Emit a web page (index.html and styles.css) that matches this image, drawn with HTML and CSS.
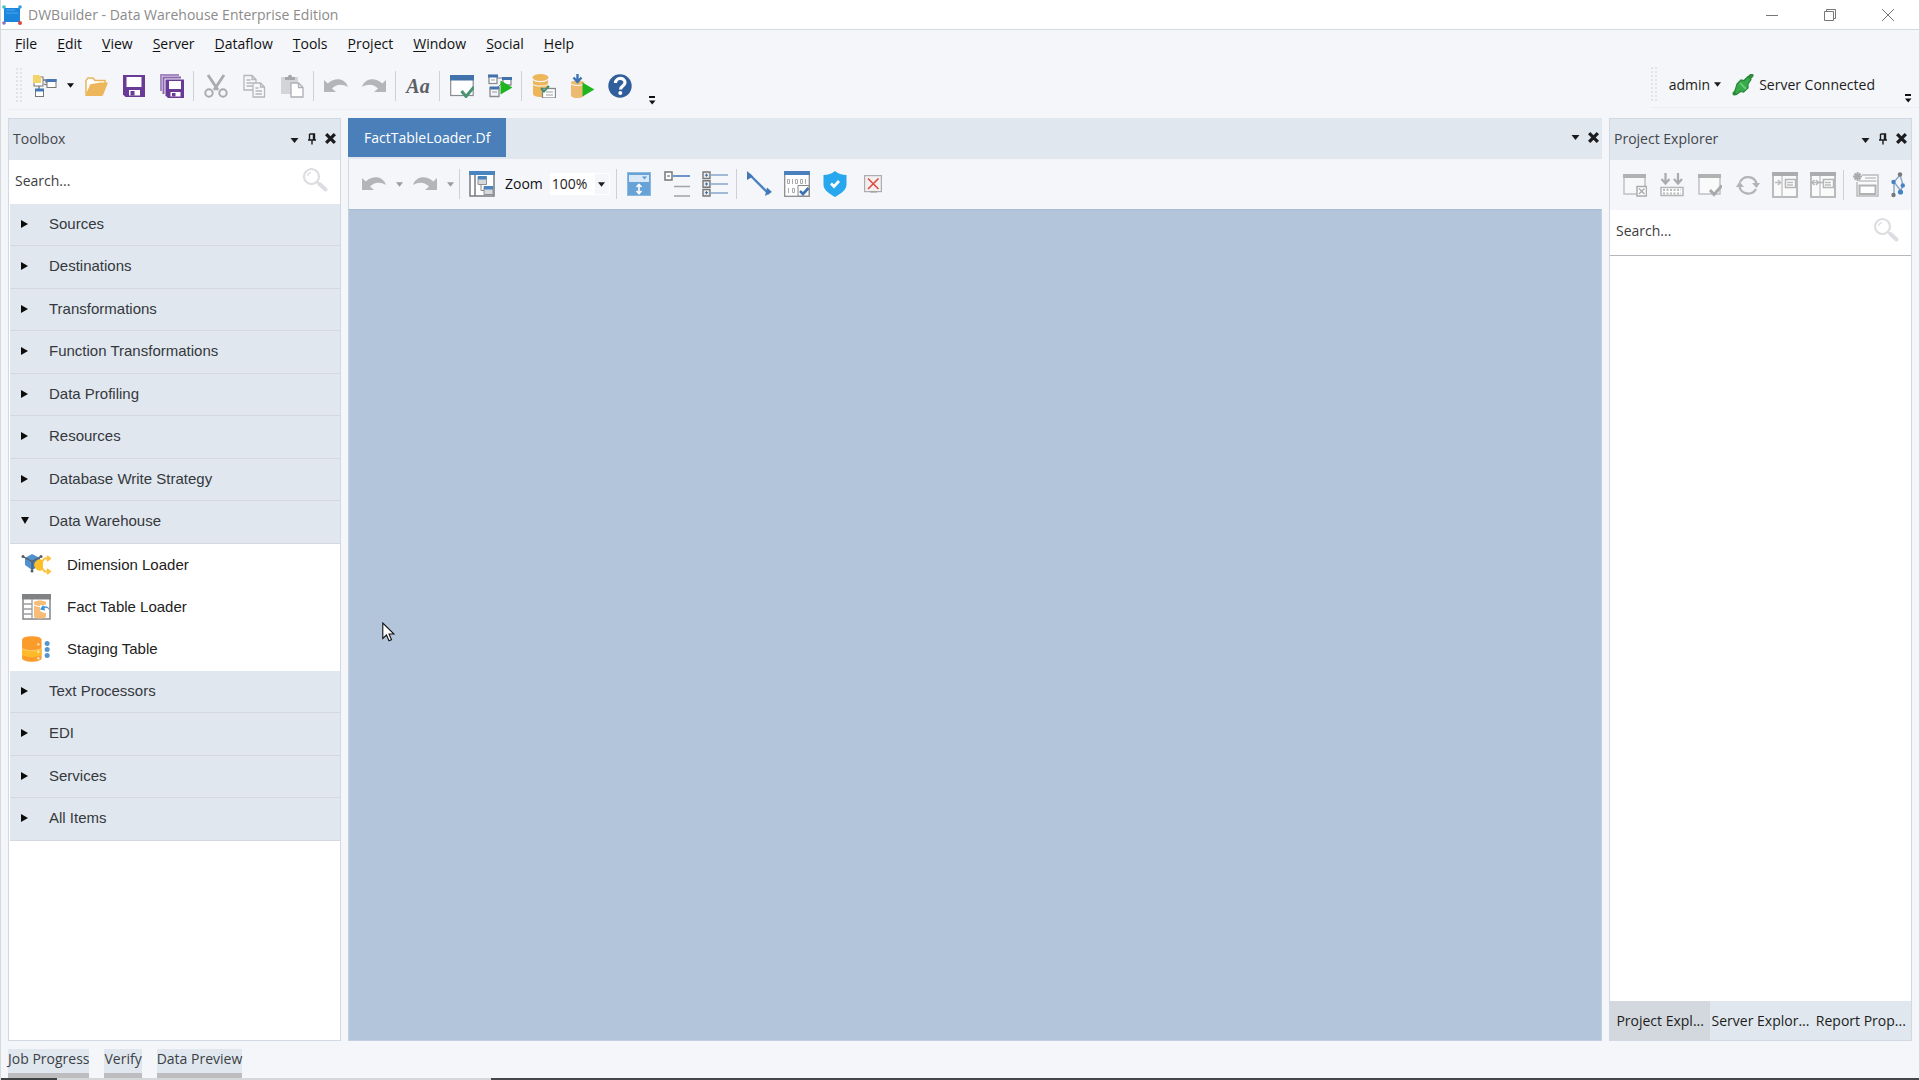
FILE: index.html
```html
<!DOCTYPE html>
<html lang="en">
<head>
<meta charset="utf-8">
<meta name="viewport" content="width=device-width, initial-scale=1">
<title>DWBuilder - Data Warehouse Enterprise Edition</title>
<link rel="stylesheet" href="styles.css">
</head>
<body>
<svg class="sprite" aria-hidden="true">
  <symbol id="i-caret" viewBox="0 0 8 5"><path d="M0 0h8L4 5z" fill="currentColor"/></symbol>
  <symbol id="i-pin" viewBox="0 0 10 12"><path d="M2.500 1h5v6M2.500 1v6M6.500 1v6M1 7h8M5 7v4.500" fill="none" stroke="currentColor" stroke-width="1.400"/></symbol>
  <symbol id="i-x" viewBox="0 0 12 12"><path d="M2 2l8 8M10 2l-8 8" stroke="currentColor" stroke-width="3"/></symbol>
  <symbol id="i-over" viewBox="0 0 8 9"><path d="M1 0h6v2H1zM1 4.500h6.500L4.200 8.500z" fill="#111"/></symbol>
  <symbol id="i-search" viewBox="0 0 26 26"><circle cx="9.500" cy="9.500" r="7.500" fill="none" stroke="#dcdde0" stroke-width="2.200"/><path d="M5.500 9a4.500 4.500 0 0 1 3.500-3.500" fill="none" stroke="#e2e3e6" stroke-width="1.500"/><path d="M15 15l2 2" stroke="#dcdde0" stroke-width="2"/><path d="M17.500 17l6 5.500" stroke="#dcdde0" stroke-width="4" stroke-linecap="round"/></symbol>
  <symbol id="i-undo" viewBox="0 0 24 24"><path d="M0 6v12h12l-4-3.500C12 10 18 9.500 24 13 21 4 11 3 3.800 9.500z" fill="#b3b5b8"/></symbol>
  <symbol id="i-new" viewBox="0 0 24 24"><path d="M9 6h4v2l2 1M11 10l3 1M6 12v3" fill="none" stroke="#70757c" stroke-width="1.300"/><rect x="1" y="3" width="9" height="9" fill="#fff" stroke="#777"/><path d="M0 1h6l2 2v6H0z" fill="#f2d468"/><rect x="14" y="5.500" width="9" height="8" fill="#fff" stroke="#777"/><path d="M13.500 5h10v3h-10z" fill="#4678b5"/><rect x="2.500" y="15.500" width="8" height="7" fill="#fff" stroke="#777"/><path d="M2 14.500h9v3H2z" fill="#4678b5"/></symbol>
  <symbol id="i-open" viewBox="0 0 24 24"><path d="M2 20V6.500L4 4h5l2 2.500h10V10" fill="#fff" stroke="#e9b55b" stroke-width="1.500"/><path d="M1 22L6 11c0-1 1-1 2-1l8-1.500h8L19.500 20c-.5 1.500-1 2-2.500 2z" fill="#edb65a"/></symbol>
  <symbol id="i-save" viewBox="0 0 24 24"><path d="M1 1h22v22H3.500L1 20.500z" fill="#6a3b96"/><path d="M4.500 3h15v10h-15z" fill="#fff"/><path d="M7 16h11v5.500H7z" fill="#fff"/><path d="M8.500 17h4v4.500h-4z" fill="#6a3b96"/></symbol>
  <symbol id="i-saveall" viewBox="0 0 24 24"><path d="M1 17V1h18" fill="none" stroke="#a58bc0" stroke-width="2"/><path d="M3.500 20V3.500H21" fill="none" stroke="#8a66ad" stroke-width="2"/><path d="M5.500 5.500H24V24H8l-2.500-2.500z" fill="#6a3b96"/><path d="M9 7h12v8H9zM10.500 18h10v4.500h-10z" fill="#fff"/><path d="M12 19h3.500v3.500H12z" fill="#6a3b96"/></symbol>
  <symbol id="i-cut" viewBox="0 0 24 24"><path d="M4 1l10 15M20 1L10 16" stroke="#a9abae" stroke-width="2.800"/><circle cx="5" cy="19" r="3.700" fill="none" stroke="#a9abae" stroke-width="2"/><circle cx="19" cy="19" r="3.700" fill="none" stroke="#a9abae" stroke-width="2"/></symbol>
  <symbol id="i-copy" viewBox="0 0 24 24"><g fill="#f7f8fa" stroke="#b4b6b9" stroke-width="1.300"><path d="M2 1.500h8l4 4V16H2zM10 1.500v4h4"/><path d="M4.500 6h4M4.500 9h6M4.500 12h6"/><path d="M11 9h7.500l4 4v10H11zM18.500 9v4h4"/><path d="M13.500 14h3M13.500 17h6.500M13.500 20h6.500"/></g></symbol>
  <symbol id="i-paste" viewBox="0 0 24 24"><path d="M1 3h17v17H1z" fill="#d2d4d7"/><path d="M5 3h3c0-3 4-3 4 0h3v3H5z" fill="#a5a7aa"/><path d="M11 9h7.500l4.500 4.500V23H11z" fill="#fff" stroke="#adafb2" stroke-width="1.300"/><path d="M18.500 9v4.500H23" fill="none" stroke="#adafb2" stroke-width="1.300"/></symbol>
  <symbol id="i-verify" viewBox="0 0 24 24"><rect x=".7" y="2" width="22.500" height="19.500" fill="#fff" stroke="#888c92" stroke-width="1.200"/><path d="M0 1h24v5.500H0z" fill="#4272ab"/><path d="M11.500 17l4.500 5.500L24 13" fill="none" stroke="#4b9472" stroke-width="3"/></symbol>
  <symbol id="i-run" viewBox="0 0 24 24"><path d="M9 4h6M8 15l5-5" stroke="#70757c"/><rect x="1" y="1.500" width="8" height="8" fill="#fff" stroke="#888c92" stroke-width="1.300"/><path d="M0 .5h10v3H0zM14 3h10v3H14zM1.500 12.500h10v3h-10z" fill="#4272ab"/><path d="M2 14v8.500h9V14M15 6v5h8V6" fill="none" stroke="#888c92" stroke-width="1.300"/><path d="M3 6h4M4 18h5" stroke="#999"/><path d="M12.500 6.500L24.500 13.500l-12 7z" fill="#1fb51f"/></symbol>
  <symbol id="i-db" viewBox="0 0 24 24"><ellipse cx="8.500" cy="3.500" rx="8" ry="3.500" fill="#edb65a"/><path d="M1 6c2.500 3 12 3 15 0v4c-3 2-12 2-15 0zM1 11c3 2 12 2 15 0v9c0 4-15 4-15 0z" fill="#edb65a"/><rect x="10.500" y="14.500" width="13" height="9.500" fill="#fff" stroke="#85888c" stroke-width="1.300"/><path d="M14 18h7M14 21h7" stroke="#9a9da1"/><path d="M9 14l3 3.500 5-5.500" fill="none" stroke="#3f8d69" stroke-width="2"/></symbol>
  <symbol id="i-dbrun" viewBox="0 0 24 24"><path d="M1 8c3-2 9-2 13 0v14c-4 3-10 3-13 0z" fill="#edba72"/><path d="M1 10c4 2 9 2 13 0" fill="none" stroke="#fff"/><path d="M7.500 0v7M3.500 3.500L7.500 8l4-4.500" fill="none" stroke="#3c73b4" stroke-width="2.400"/><path d="M12.500 8.500L24.500 15.500l-12 7z" fill="#1fb51f"/></symbol>
  <symbol id="i-help" viewBox="0 0 24 24"><circle cx="12" cy="12" r="11.700" fill="#315f9b"/><path d="M7.500 9c0-6 9.500-6 9.500-.5 0 3.500-4.500 3.500-4.500 7" fill="none" stroke="#fff" stroke-width="3.200"/><circle cx="12.300" cy="19" r="2" fill="#fff"/></symbol>
  <symbol id="i-layout" viewBox="0 0 26 26"><rect x="1" y="1" width="24" height="24" fill="#fff" stroke="#777b81" stroke-width="1.500"/><path d="M0 0h26v4H0z" fill="#4a85bf"/><path d="M6 4v21" stroke="#777b81" stroke-width="1.500"/><path d="M9 5.500h8.500v8H9zM15 15.500h9v8h-9z" fill="#d6d8db" stroke="#8c9096"/><path d="M9 5h8.500v3.500H9zM15 15h9v3.500h-9z" fill="#4a85bf"/><path d="M12 13.500v6h3" fill="none" stroke="#888"/></symbol>
  <symbol id="i-fit" viewBox="0 0 24 24"><rect x=".5" y=".5" width="23" height="23" fill="#67a3d7" stroke="#8bb8de"/><path d="M2 3h20v7H2z" fill="#d8e8f6"/><path d="M15 4.500l2.500 3 2.500-3z" fill="#5d9ad0"/><path d="M12 13v8M9.500 15l2.500-2.500 2.500 2.500M9.500 19l2.500 2.500 2.500-2.500" fill="none" stroke="#fff" stroke-width="1.600"/></symbol>
  <symbol id="i-collapse" viewBox="0 0 26 26"><rect x="1" y="1" width="7" height="8" fill="#fff" stroke="#777" stroke-width="1.500"/><path d="M3 5h3" stroke="#555"/><path d="M9 5h17" stroke="#3f76b8" stroke-width="1.500"/><path d="M10 15.500h16M10 25h16" stroke="#a1a3a6" stroke-width="1.500"/></symbol>
  <symbol id="i-expand" viewBox="0 0 26 26"><g fill="#e8eaec" stroke="#777" stroke-width="1.400"><path d="M1 1h7v6.500H1zM1 9.700h7v6.500H1zM1 18.500h7V25H1z"/></g><path d="M3 4.200h3M3 13h3M3 21.700h3M4.500 2.700v3M4.500 11.500v3M4.500 20.200v3" stroke="#3a6ca8"/><path d="M9 4h17M9 13h17M9 22h17" stroke="#9fb9d6" stroke-width="2.200"/></symbol>
  <symbol id="i-link" viewBox="0 0 26 26"><path d="M3 3l20 20" stroke="#4c83be" stroke-width="2.400"/><path d="M1 0l6 5.500L1 9zM19 25l7-4-5-4.500z" fill="#4278b6"/></symbol>
  <symbol id="i-data" viewBox="0 0 26 26"><rect x=".7" y=".7" width="24.600" height="24.600" fill="#fff" stroke="#8b8d90" stroke-width="1.300"/><path d="M0 0h26v4H0z" fill="#4a80bd"/><g fill="none" stroke="#a8aaad"><path d="M3.500 8.500h2v4h-2zM8.500 8v5M11.500 8.500h2v4h-2zM16.500 8.500h2v4h-2zM21.500 8v5M4.500 17v5M8.500 17.500h2v4h-2z"/></g><path d="M14 14.500h11V25H14z" fill="#fff" stroke="#85878a"/><path d="M16 20l3 3 5.500-6" fill="none" stroke="#3d73b3" stroke-width="2.600"/></symbol>
  <symbol id="i-shield" viewBox="0 0 24 26"><path d="M12 0c3 2.500 7 4 11.500 4v9.500C23.500 19 18 22.500 12 26 6 22.500.5 19 .5 13.500V4C5 4 9 2.500 12 0z" fill="#28a6ee"/><path d="M8 12.500l3 3 5-5.500" fill="none" stroke="#fff" stroke-width="2.800"/></symbol>
  <symbol id="i-del" viewBox="0 0 18 18"><rect x=".6" y=".6" width="16.800" height="16" fill="#f1eff0" stroke="#adadad" stroke-width="1.200"/><path d="M4 3.500l10.500 10.500M14.500 3.500L4 14" stroke="#e0493f" stroke-width="1.600"/><path d="M6 17h7" stroke="#999"/></symbol>
  <symbol id="i-pclose" viewBox="0 0 24 24"><rect x="1" y="2" width="21" height="19" fill="#f7f8fa" stroke="#c0c1c3" stroke-width="1.500"/><path d="M0 1h23v4H0z" fill="#b0b1b3"/><path d="M14 13.500h9.500V23H14z" fill="#fff" stroke="#aaabad" stroke-width="1.500"/><path d="M16 15.500l5.500 5.500M21.500 15.500L16 21" stroke="#aaabad" stroke-width="1.500"/></symbol>
  <symbol id="i-pload" viewBox="0 0 24 24"><path d="M5.500 0v9M1.500 6l4 4.500 4-4.500M18 0v9M14 6l4 4.500L22 6" fill="none" stroke="#aaabad" stroke-width="2.200"/><path d="M1 14.500h22v8H1z" fill="#fff" stroke="#b4b5b7" stroke-width="1.500"/><path d="M3 17h18M3 20.500h18" stroke="#b9babc" stroke-width="2" stroke-dasharray="2 1.500"/></symbol>
  <symbol id="i-pcheck" viewBox="0 0 24 24"><rect x="1" y="2" width="21" height="19" fill="#fafafb" stroke="#c0c1c3" stroke-width="1.500"/><path d="M0 1h23v4H0z" fill="#b0b1b3"/><path d="M12 17l4 4.500 8-9" fill="none" stroke="#a8a9ab" stroke-width="3"/></symbol>
  <symbol id="i-refresh" viewBox="0 0 24 24"><path d="M4 9a9 9 0 0 1 16.500 1M20 16A9 9 0 0 1 3.500 14" fill="none" stroke="#b3b4b6" stroke-width="2.300"/><path d="M16 10h8l-3.500 5zM0 14l3.500-5.500L8 14z" fill="#b3b4b6"/></symbol>
  <symbol id="i-panel" viewBox="0 0 26 26"><rect x="1" y="1" width="24" height="24" fill="#fafafb" stroke="#b3b4b6" stroke-width="1.800"/><path d="M0 0h26v4H0z" fill="#abacae"/><path d="M10 4v21" stroke="#c6c7c9" stroke-width="1.500"/><path d="M13.500 7.500h10v8h-10z" fill="#fff" stroke="#b3b4b6" stroke-width="1.500"/><path d="M15 10.500h6M15 13h6M3 10.500h5M6 8l2.500 2.500L6 13" fill="none" stroke="#b9babc" stroke-width="1.500"/></symbol>
  <symbol id="i-panel2" viewBox="0 0 26 26"><use href="#i-panel"/><path d="M4.500 8L2 10.500 4.500 13M7 10.500h6" fill="none" stroke="#b3b4b6" stroke-width="1.500"/></symbol>
  <symbol id="i-padd" viewBox="0 0 26 26"><path d="M4 10v14h21V3H9" fill="#fafafb" stroke="#b9babc" stroke-width="1.500"/><path d="M5.500 9h18M12 6h11" stroke="#c2c3c5" stroke-width="1.500"/><path d="M6.500 13.500h16v8.500h-16z" fill="#fff" stroke="#b0b1b3" stroke-width="2"/><path d="M4.500 0v9M0 4.500h9M1.500 1.500l6 6M7.500 1.500l-6 6" stroke="#a9abad" stroke-width="2"/></symbol>
  <symbol id="i-graph" viewBox="0 0 14 26"><path d="M9 3L3 10v13M3 10l7 9M9 3l3 10-2.500 6" fill="none" stroke="#8fa9c6" stroke-width="1.500"/><circle cx="9" cy="2.500" r="2.200" fill="#75797e"/><circle cx="2.500" cy="23" r="2.200" fill="#75797e"/><circle cx="2.500" cy="10" r="2.200" fill="#4683c4"/><circle cx="11.800" cy="13.500" r="2.200" fill="#4683c4"/><circle cx="9.500" cy="20" r="2.600" fill="#4683c4"/></symbol>
  <symbol id="i-plug" viewBox="0 0 22 22"><path d="M2.500 19.500l5-5M14.500 6.500l5-5" stroke="#2c8a39" stroke-width="4" stroke-linecap="round"/><path d="M5 10l4-4 3 .5 4-4 3 3-3 4.500v4l-4.500 4-3-.5-4 3-2-2.500z" fill="#36ab49" stroke="#2b8738" stroke-width="1.200"/><path d="M8 9l6 6" stroke="#65ce74" stroke-width="2"/></symbol>
  <symbol id="i-dim" viewBox="0 0 30 24"><path d="M4 5l7-4 8 4v7l-8 5-7-5z" fill="#5291d0"/><path d="M11 8.500V17l8-5V5z" fill="#3f7abc"/><path d="M2 3.500l9 5 9-5M11 9v8" fill="none" stroke="#575c63" stroke-width="1.300"/><circle cx="2" cy="3.500" r="1.500" fill="#575c63"/><circle cx="20" cy="3.500" r="1.500" fill="#575c63"/><circle cx="11" cy="18" r="1.500" fill="#575c63"/><path d="M22 7.500a5.500 5.500 0 1 0 0 9z" fill="#fdbf27"/><path d="M21 9l2.500-3.500h5M21 15l2.500 3.500h5M26 3l3 2.500L26 8M26 16l3 2.500-3 2.500" fill="none" stroke="#fbc23c" stroke-width="1.900"/></symbol>
  <symbol id="i-fact" viewBox="0 0 30 26"><path d="M2 1h27v24H2z" fill="#fff" stroke="#858789" stroke-width="1.500"/><path d="M1 0h29v5.500H1z" fill="#808284"/><path d="M11 5v20M2 10h9M2 15h9M2 20h9" stroke="#9a9c9e" stroke-width="1.300"/><path d="M13 8c3-2 9-2 12 0v15c-3 2-9 2-12 0z" fill="#f7bd78"/><path d="M13 11c4 2 8 2 12 0" fill="none" stroke="#fff"/><path d="M19 11h9v8h-5l-4-2z" fill="#fff"/><path d="M28.500 17c-1-3-3-3.500-5-3l.5 2.500-5-1 3-4.500.7 1.500c4-1 6 1.500 5.800 4.500z" fill="#3f8fd8"/></symbol>
  <symbol id="i-stage" viewBox="0 0 30 28"><path d="M0 4c0-5 21-5 21 0v20c0 5-21 5-21 0z" fill="#fb9b2c"/><path d="M0 13.500c5 3 16 3 21 0v7c-5 3-16 3-21 0z" fill="#fdbb2a"/><path d="M0 13.500c5 3 16 3 21 0" fill="none" stroke="#fdd07a"/><circle cx="17.500" cy="9" r="1.300" fill="#ffe6b8"/><circle cx="17.500" cy="17" r="1.300" fill="#ffe6b8"/><circle cx="17.500" cy="24" r="1.300" fill="#ffe6b8"/><g fill="#5696cd"><circle cx="27" cy="8" r="2.700"/><circle cx="27" cy="14.500" r="2.700"/><circle cx="27" cy="21" r="2.700"/></g></symbol>
</svg>

<div class="window">
  <header class="titlebar">
    <svg class="logo" viewBox="0 0 20 20"><rect x="2" y="3" width="16" height="14" fill="#1c86dc"/><path d="M4 5h9M4 8h12" stroke="#4aa7ee"/><circle cx="2" cy="2" r="1.800" fill="#3ec0c8"/><circle cx="18" cy="2" r="1.800" fill="#2a9ee0"/><circle cx="2" cy="18" r="1.800" fill="#8d6fc0"/><circle cx="18" cy="18" r="2" fill="#e0473a"/></svg>
    <h1 class="title">DWBuilder - Data Warehouse Enterprise Edition</h1>
    <button class="win-btn" aria-label="Minimize"><svg viewBox="0 0 12 12"><path d="M0 6.500h12"/></svg></button>
    <button class="win-btn" aria-label="Restore"><svg viewBox="0 0 12 12"><path d="M.5 2.500h9v9h-9zM2.500 2.500v-2h9v9h-2"/></svg></button>
    <button class="win-btn" aria-label="Close"><svg viewBox="0 0 12 12"><path d="M0 0l12 12M12 0L0 12"/></svg></button>
  </header>

  <nav class="menubar">
    <a href="#"><u>F</u>ile</a><a href="#"><u>E</u>dit</a><a href="#"><u>V</u>iew</a><a href="#"><u>S</u>erver</a><a href="#"><u>D</u>ataflow</a><a href="#"><u>T</u>ools</a><a href="#"><u>P</u>roject</a><a href="#"><u>W</u>indow</a><a href="#"><u>S</u>ocial</a><a href="#"><u>H</u>elp</a>
  </nav>

  <div class="toolbars">
    <div class="toolbar main-tools">
      <span class="grip"></span>
      <button class="tool" aria-label="New"><svg><use href="#i-new"/></svg></button>
      <button class="drop" aria-label="New options"><svg><use href="#i-caret"/></svg></button>
      <button class="tool" aria-label="Open"><svg><use href="#i-open"/></svg></button>
      <button class="tool" aria-label="Save"><svg><use href="#i-save"/></svg></button>
      <button class="tool" aria-label="Save all"><svg><use href="#i-saveall"/></svg></button>
      <span class="sep"></span>
      <button class="tool" aria-label="Cut"><svg><use href="#i-cut"/></svg></button>
      <button class="tool" aria-label="Copy"><svg><use href="#i-copy"/></svg></button>
      <button class="tool" aria-label="Paste"><svg><use href="#i-paste"/></svg></button>
      <span class="sep"></span>
      <button class="tool" aria-label="Undo"><svg><use href="#i-undo"/></svg></button>
      <button class="tool" aria-label="Redo"><svg class="flip"><use href="#i-undo"/></svg></button>
      <span class="sep"></span>
      <button class="tool font-tool">Aa</button>
      <span class="sep"></span>
      <button class="tool" aria-label="Verify"><svg><use href="#i-verify"/></svg></button>
      <button class="tool" aria-label="Run dataflow"><svg><use href="#i-run"/></svg></button>
      <span class="sep"></span>
      <button class="tool" aria-label="Verify database"><svg><use href="#i-db"/></svg></button>
      <button class="tool" aria-label="Deploy"><svg><use href="#i-dbrun"/></svg></button>
      <button class="tool" aria-label="Help"><svg><use href="#i-help"/></svg></button>
      <button class="overflow" aria-label="Toolbar options"><svg><use href="#i-over"/></svg></button>
    </div>
    <div class="toolbar server-tools">
      <span class="grip"></span>
      <button class="user">admin<svg><use href="#i-caret"/></svg></button>
      <button class="status"><svg><use href="#i-plug"/></svg>Server Connected</button>
      <button class="overflow" aria-label="Toolbar options"><svg><use href="#i-over"/></svg></button>
    </div>
  </div>

  <main class="workspace">
    <aside class="panel toolbox">
      <div class="panel-head">
        <h2>Toolbox</h2>
        <button class="mini" aria-label="Menu"><svg class="low"><use href="#i-caret"/></svg></button>
        <button class="mini" aria-label="Pin"><svg class="pin"><use href="#i-pin"/></svg></button>
        <button class="mini" aria-label="Close"><svg class="x"><use href="#i-x"/></svg></button>
      </div>
      <label class="search"><input type="text" placeholder="Search..." aria-label="Search toolbox"><svg><use href="#i-search"/></svg></label>
      <ul class="tree">
        <li><button class="group">Sources</button></li>
        <li><button class="group">Destinations</button></li>
        <li><button class="group">Transformations</button></li>
        <li><button class="group">Function Transformations</button></li>
        <li><button class="group">Data Profiling</button></li>
        <li><button class="group">Resources</button></li>
        <li><button class="group">Database Write Strategy</button></li>
        <li><button class="group open">Data Warehouse</button>
          <ul class="items">
            <li><a href="#"><svg><use href="#i-dim"/></svg>Dimension Loader</a></li>
            <li><a href="#"><svg><use href="#i-fact"/></svg>Fact Table Loader</a></li>
            <li><a href="#"><svg><use href="#i-stage"/></svg>Staging Table</a></li>
          </ul>
        </li>
        <li><button class="group">Text Processors</button></li>
        <li><button class="group">EDI</button></li>
        <li><button class="group">Services</button></li>
        <li><button class="group">All Items</button></li>
      </ul>
    </aside>

    <section class="document">
      <div class="doc-tabs">
        <button class="doc-tab">FactTableLoader.Df</button>
        <button class="mini" aria-label="Documents"><svg><use href="#i-caret"/></svg></button>
        <button class="mini" aria-label="Close document"><svg class="x"><use href="#i-x"/></svg></button>
      </div>
      <div class="toolbar doc-tools">
        <button class="tool" aria-label="Undo"><svg><use href="#i-undo"/></svg></button>
        <button class="drop off" aria-label="Undo history"><svg><use href="#i-caret"/></svg></button>
        <button class="tool" aria-label="Redo"><svg class="flip"><use href="#i-undo"/></svg></button>
        <button class="drop off" aria-label="Redo history"><svg><use href="#i-caret"/></svg></button>
        <span class="sep"></span>
        <button class="tool big" aria-label="Layout"><svg><use href="#i-layout"/></svg></button>
        <label class="zoom-label" for="zoom">Zoom</label>
        <span class="zoom"><select id="zoom"><option>100%</option></select><svg><use href="#i-caret"/></svg></span>
        <span class="sep"></span>
        <button class="tool" aria-label="Fit height"><svg><use href="#i-fit"/></svg></button>
        <button class="tool big" aria-label="Collapse all"><svg><use href="#i-collapse"/></svg></button>
        <button class="tool big" aria-label="Expand all"><svg><use href="#i-expand"/></svg></button>
        <span class="sep"></span>
        <button class="tool big" aria-label="Link"><svg><use href="#i-link"/></svg></button>
        <button class="tool big" aria-label="Preview data"><svg><use href="#i-data"/></svg></button>
        <button class="tool big" aria-label="Data quality"><svg><use href="#i-shield"/></svg></button>
        <button class="tool small" aria-label="Clear"><svg><use href="#i-del"/></svg></button>
      </div>
      <div class="canvas"><svg class="cursor" viewBox="0 0 13 20"><path d="M.8 1v15.500l3.700-3.500 2.500 5.800 2.500-1L7 12h5z" fill="#fff" stroke="#111" stroke-width="1.100"/></svg></div>
    </section>

    <aside class="panel explorer">
      <div class="panel-head">
        <h2>Project Explorer</h2>
        <button class="mini" aria-label="Menu"><svg class="low"><use href="#i-caret"/></svg></button>
        <button class="mini" aria-label="Pin"><svg class="pin"><use href="#i-pin"/></svg></button>
        <button class="mini" aria-label="Close"><svg class="x"><use href="#i-x"/></svg></button>
      </div>
      <div class="toolbar explorer-tools">
        <button class="tool" aria-label="Close project"><svg><use href="#i-pclose"/></svg></button>
        <button class="tool" aria-label="Load"><svg><use href="#i-pload"/></svg></button>
        <button class="tool" aria-label="Verify project"><svg><use href="#i-pcheck"/></svg></button>
        <button class="tool" aria-label="Refresh"><svg><use href="#i-refresh"/></svg></button>
        <button class="tool big" aria-label="Check in"><svg><use href="#i-panel"/></svg></button>
        <button class="tool big" aria-label="Compare"><svg><use href="#i-panel2"/></svg></button>
        <span class="sep"></span>
        <button class="tool big" aria-label="Add item"><svg><use href="#i-padd"/></svg></button>
        <button class="tool big slim" aria-label="Dependencies"><svg><use href="#i-graph"/></svg></button>
      </div>
      <label class="search"><input type="text" placeholder="Search..." aria-label="Search project"><svg><use href="#i-search"/></svg></label>
      <div class="project-tree"></div>
      <div class="side-tabs">
        <button class="active">Project Expl...</button><button>Server Explor...</button><button>Report Prop...</button>
      </div>
    </aside>
  </main>

  <footer class="dock-tabs">
    <button>Job Progress</button><button>Verify</button><button>Data Preview</button>
  </footer>
  <div class="edge"></div>
</div>
</body>
</html>
```
FILE: styles.css
```css
:root {
  --chrome: #f4f6fa;
  --head: #e0e7ef;
  --line: #d3d9e2;
  --ui: "Open Sans", "Noto Sans", sans-serif;
}

* { box-sizing: border-box; }

body {
  margin: 0;
  font-family: var(--ui);
  font-size: 14px;
  line-height: 20px;
  color: #1d1d20;
  background: var(--chrome);
}

button, input, select {
  font: inherit;
  color: inherit;
  background: none;
  border: 0;
  padding: 0;
  margin: 0;
}

a { color: inherit; text-decoration: none; }
ul { list-style: none; margin: 0; padding: 0; }
svg { display: block; flex: none; }
.sprite { display: none; }

.window {
  display: flex;
  flex-direction: column;
  min-height: 100vh;
  border-left: 1px solid #d5d8dc;
  border-right: 1px solid #d5d8dc;
}

/* Title bar */
.titlebar {
  display: flex;
  align-items: center;
  height: 30px;
  padding: 0 2px 0 1px;
  background: #fff;
  border-bottom: 1px solid #d6dadd;
}
.logo { width: 20px; height: 20px; }
.title {
  flex: 1;
  margin: 0 0 0 6px;
  font-size: 14px;
  font-weight: 400;
  color: #8b8b8b;
}
.win-btn { display: grid; place-items: center; width: 58px; height: 28px; }
.win-btn svg { width: 12px; height: 12px; fill: none; stroke: #777; }

/* Menu */
.menubar {
  display: flex;
  gap: 20px;
  height: 28px;
  padding: 4px 14px;
}
.menubar a { color: #111; }
.menubar u { text-underline-offset: 2px; }

/* Toolbars */
.toolbars { display: flex; justify-content: space-between; }
.toolbar { display: flex; align-items: center; }
.main-tools {
  height: 52px;
  padding: 4px 0 0 8px;
  margin-left: 7px;
  border-bottom: 1px solid #eceff3;
}
.server-tools {
  height: 50px;
  padding: 4px 7px 0 0;
  border-bottom: 1px solid #eceff3;
}
.grip {
  width: 8px;
  height: 36px;
  margin-right: 2px;
  background: radial-gradient(circle at 1px 1px, #e0e3e7 1px, transparent 1px) 0 0 / 4px 4px;
}
.tool {
  display: grid;
  place-items: center;
  width: 38px;
  height: 38px;
}
.tool svg { width: 24px; height: 24px; }
.tool.big svg { width: 26px; height: 26px; }
.tool.small svg { width: 18px; height: 18px; }
.tool.slim { width: 26px; }
.flip { transform: scaleX(-1); }
.drop { display: grid; place-items: center; width: 13px; height: 38px; color: #111; }
.drop svg { width: 7px; height: 5px; }
.drop.off { color: #9b9da0; }
.sep { width: 1px; height: 30px; margin: 0 3px 0 2px; background: #cdd1d7; }
.font-tool {
  font: italic bold 20px/24px "Liberation Serif", serif;
  color: #5d5f62;
}
.overflow { align-self: flex-end; width: 8px; margin: 0 0 4px 9px; }
.overflow svg { width: 8px; height: 9px; }
.user { display: flex; align-items: center; gap: 4px; margin-left: 8px; }
.user svg { width: 7px; height: 5px; }
.status { display: flex; align-items: center; gap: 5px; margin: 0 20px 0 11px; }
.status svg { width: 22px; height: 22px; }

/* Workspace */
.workspace {
  flex: 1;
  display: grid;
  grid-template-columns: 333px minmax(0, 1fr) 303px;
  column-gap: 7px;
  padding: 8px 7px 0;
}
.panel {
  display: flex;
  flex-direction: column;
  background: #fff;
  border: 1px solid var(--line);
}
.panel-head {
  display: flex;
  align-items: center;
  height: 41px;
  padding: 0 1px 2px 4px;
  background: var(--head);
}
.panel-head h2 {
  flex: 1;
  margin: 0;
  font-size: 14px;
  font-weight: 400;
  color: #43464b;
}
.mini { display: grid; place-items: center; width: 18px; height: 24px; color: #1c1c1e; }
.mini svg { width: 9px; height: 5px; }
.mini .low { margin-top: 4px; }
.mini .pin { width: 10px; height: 12px; }
.mini .x { width: 13px; height: 13px; }
.search {
  display: flex;
  align-items: center;
  height: 44px;
  padding: 0 12px 2px 6px;
  background: #fff;
}
.search input { flex: 1; min-width: 0; font-size: 14px; color: #333; outline: 0; }
.search input::placeholder { color: #3c3c3e; opacity: 1; }
.search svg { width: 26px; height: 26px; margin-bottom: 2px; }

/* Toolbox tree */
.tree { padding-left: 1px; font: 15px/20px "Liberation Sans", sans-serif; color: #35383c; }
.group {
  position: relative;
  display: block;
  width: 100%;
  height: 42px;
  padding: 0 0 2px 39px;
  text-align: left;
  background: var(--head);
  border-bottom: 1px solid #d3d8e1;
}
.tree > li:nth-child(even) > .group { height: 43px; }
.group::before {
  content: "";
  position: absolute;
  left: 11px;
  top: 16px;
  border: solid transparent;
  border-width: 4px 0 4px 7px;
  border-left-color: #0c0c0c;
}
.group.open::before {
  border-width: 7px 4px 0;
  border-color: #0c0c0c transparent transparent;
}
.items { padding-bottom: 1px; }
.items a {
  display: flex;
  align-items: center;
  gap: 12px;
  height: 42px;
  padding-left: 11px;
  color: #222;
}
.items svg { width: 30px; height: 26px; margin-right: 4px; }

/* Document */
.document { display: flex; flex-direction: column; }
.doc-tabs {
  display: flex;
  align-items: center;
  height: 41px;
  padding-bottom: 2px;
  background: var(--head);
}
.doc-tab {
  align-self: flex-start;
  height: 39px;
  padding: 0 16px;
  margin-right: auto;
  color: #fff;
  background: #4a7fb9;
}
.doc-tools { height: 50px; padding-left: 6px; border-left: 1px solid var(--line); }
.zoom-label { margin: 0 7px 0 4px; color: #111; }
.zoom {
  display: grid;
  grid-template-columns: 1fr 14px;
  align-items: center;
  width: 60px;
  height: 22px;
  margin-right: 4px;
  background: linear-gradient(to left, var(--chrome) 14px, #fff 14px);
  border: 1px solid #fff;
}
.zoom select {
  grid-area: 1 / 1 / 2 / 3;
  appearance: none;
  width: 100%;
  padding-left: 1px;
  font-size: 14px;
  outline: 0;
}
.zoom svg {
  grid-area: 1 / 2 / 2 / 3;
  justify-self: center;
  width: 7px;
  height: 5px;
  pointer-events: none;
}
.canvas {
  position: relative;
  flex: 1;
  background: #b3c5db;
  border: 1px solid #c3d0e1;
  border-top-color: #a9bcd4;
}
.cursor { position: absolute; left: 33px; top: 412px; width: 13px; height: 20px; }

/* Project explorer */
.explorer-tools { height: 50px; padding-left: 6px; background: var(--chrome); }
.explorer .search { height: 46px; padding-bottom: 4px; border-bottom: 1px solid #b4b7bb; }
.project-tree { flex: 1; }
.side-tabs {
  display: grid;
  grid-template-columns: 1fr 1fr 1fr;
  background: var(--head);
}
.side-tabs button { height: 39px; white-space: nowrap; }
.side-tabs .active { background: #d3d8de; }

/* Bottom dock */
.dock-tabs { display: flex; gap: 15px; padding: 8px 7px 0; }
.dock-tabs button {
  height: 29px;
  padding-bottom: 5px;
  color: #3c3f44;
  background: var(--head);
  border-bottom: 5px solid #bdbdc0;
}
.edge {
  height: 2px;
  background: linear-gradient(to right, #3f4143 56px, #d6d7d8 56px, #d6d7d8 490px, #454849 490px);
}
```
